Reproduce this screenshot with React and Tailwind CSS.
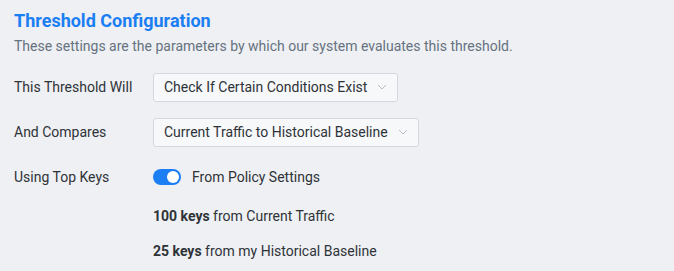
export default function App() {
  const Chevron = () => (
    <svg width="10" height="6" viewBox="0 0 10 6" className="ml-[10px]" fill="none">
      <path d="M1 1l4 4 4-4" stroke="#b5bcc6" strokeWidth="1" />
    </svg>
  );
  return (
    <div className="w-[674px] h-[271px] bg-[#eef0f4] font-['Roboto',sans-serif] text-[14px] text-[#2e3338] px-[14px] pt-[9px]">
      <h1 className="text-[18px] font-bold text-[#1b7ef3] leading-[24px]">Threshold Configuration</h1>
      <p className="text-[14px] text-[#66727f] leading-[20px] mt-[3px]">These settings are the parameters by which our system evaluates this threshold.</p>
      <div className="mt-[16px] flex items-center h-[30px]">
        <div className="w-[139px]">This Threshold Will</div>
        <div className="flex items-center h-[29px] px-[10px] bg-[#f7f8fa] border border-[#d5d9df] rounded-[3px]">
          <span>Check If Certain Conditions Exist</span>
          <Chevron />
        </div>
      </div>
      <div className="mt-[15px] flex items-center h-[30px]">
        <div className="w-[139px]">And Compares</div>
        <div className="flex items-center h-[29px] px-[10px] bg-[#f7f8fa] border border-[#d5d9df] rounded-[3px]">
          <span>Current Traffic to Historical Baseline</span>
          <Chevron />
        </div>
      </div>
      <div className="mt-[15px] flex items-center h-[30px]">
        <div className="w-[139px]">Using Top Keys</div>
        <div className="flex items-center">
          <div className="w-[28px] h-[16px] rounded-full bg-[#1b7ef3] flex items-center justify-end pr-[2px]">
            <div className="w-[12px] h-[12px] rounded-full bg-white" />
          </div>
          <span className="ml-[11px]">From Policy Settings</span>
        </div>
      </div>
      <div className="ml-[139px] mt-[14px] leading-[20px]"><b className="font-bold">100 keys</b> from Current Traffic</div>
      <div className="ml-[139px] mt-[15px] leading-[20px]"><b className="font-bold">25 keys</b> from my Historical Baseline</div>
    </div>
  );
}
